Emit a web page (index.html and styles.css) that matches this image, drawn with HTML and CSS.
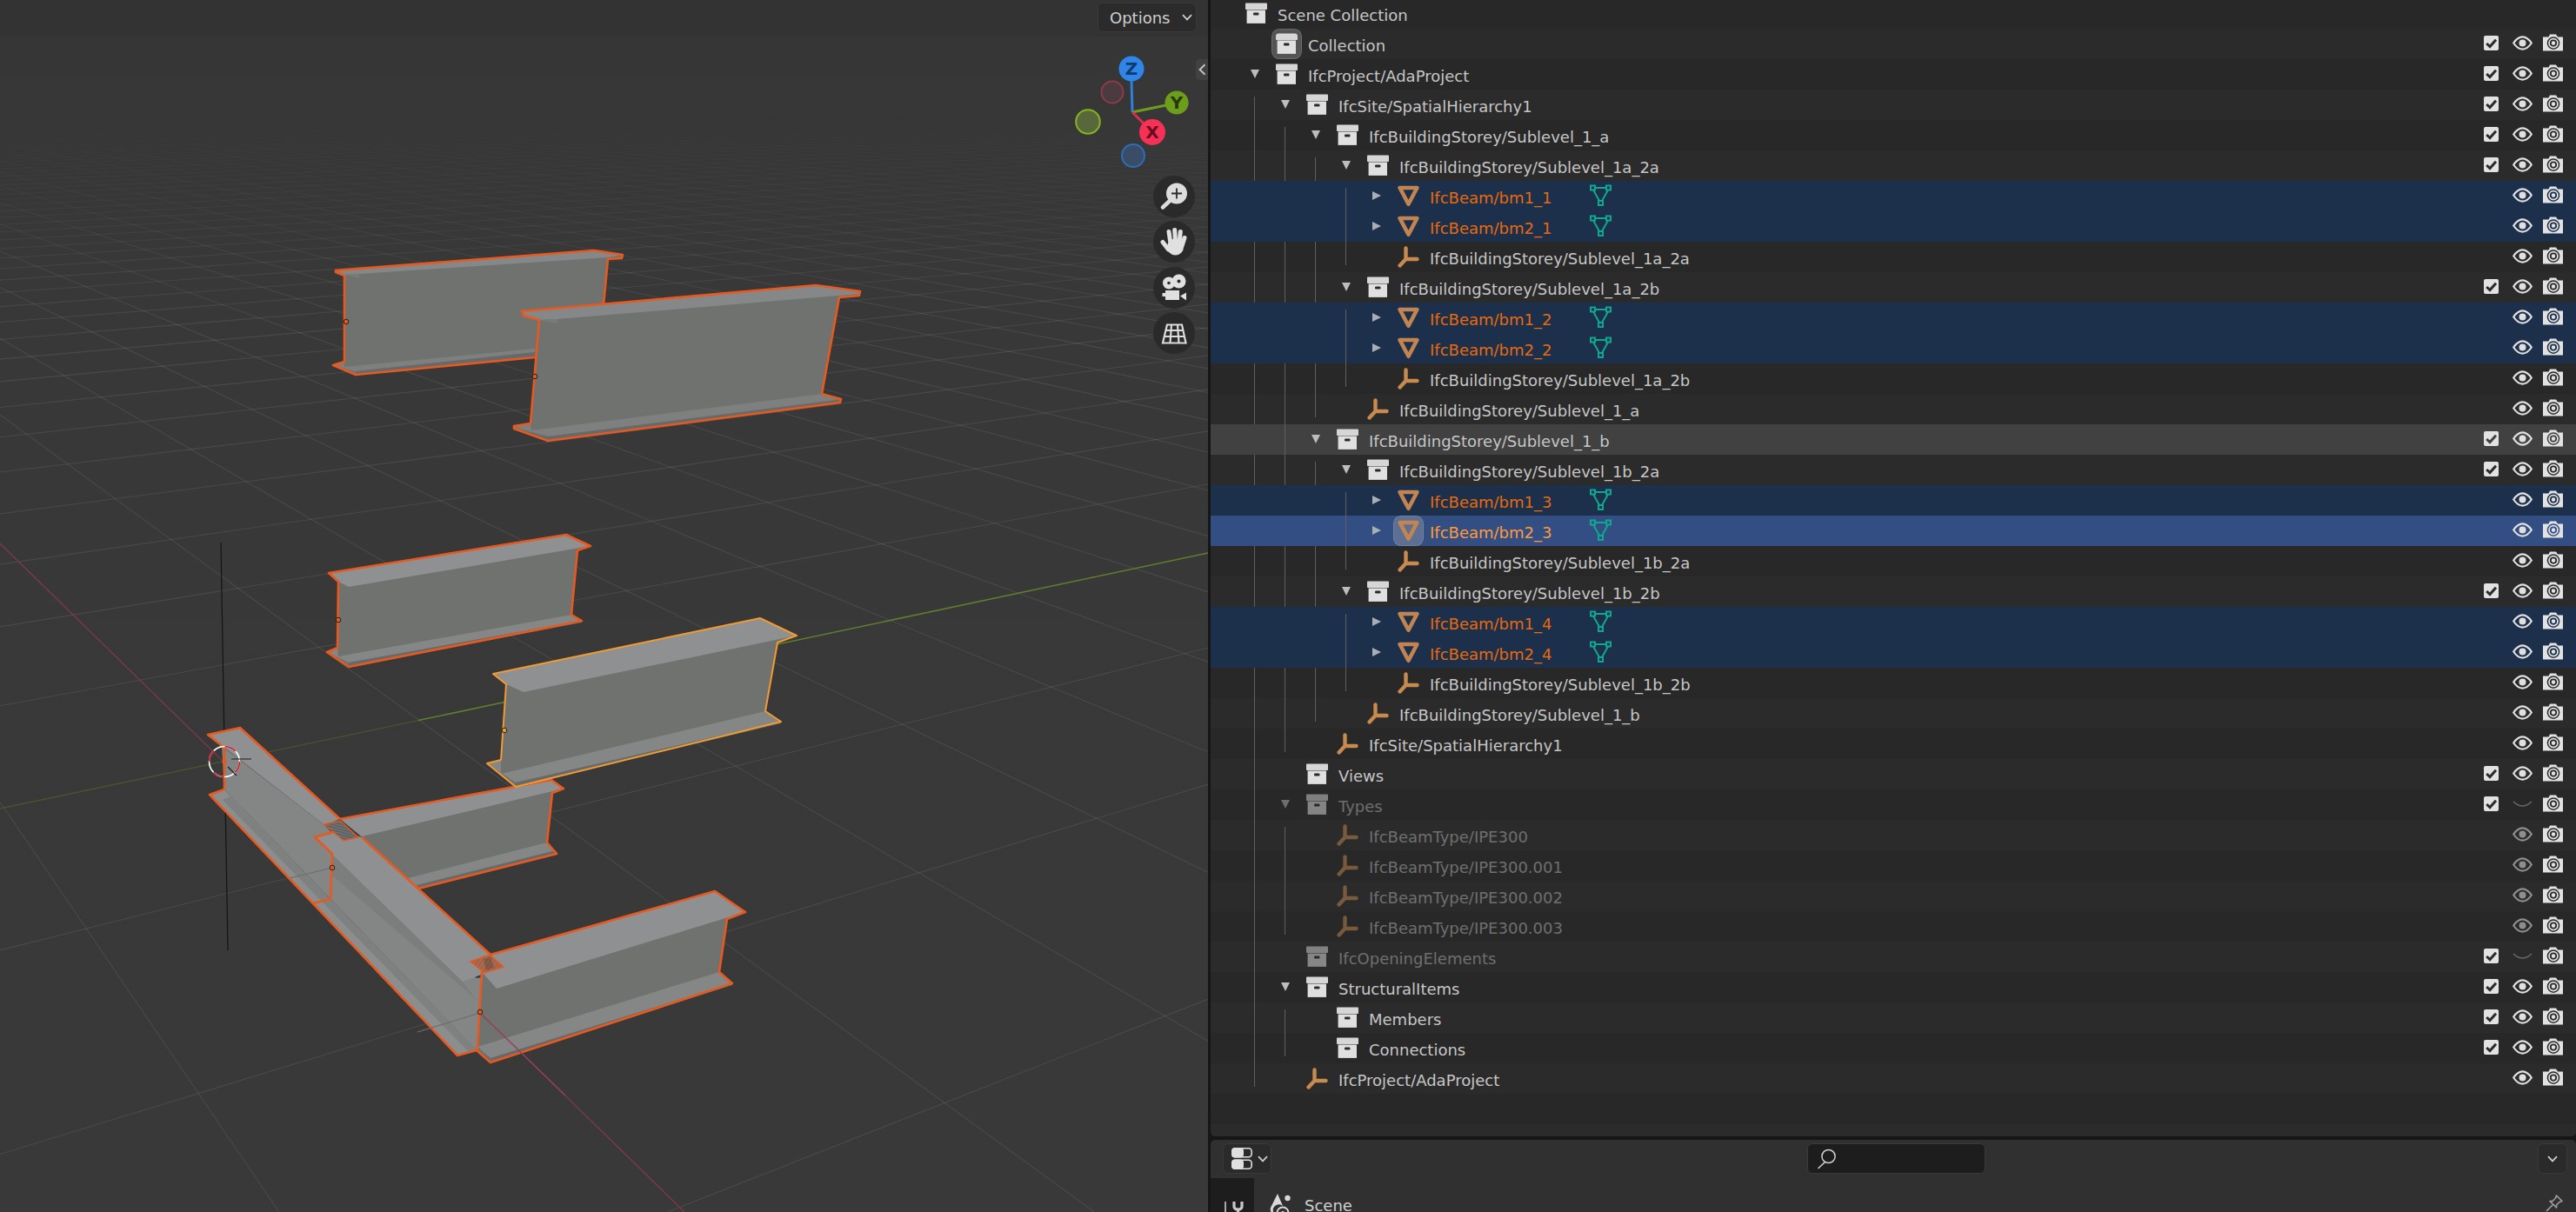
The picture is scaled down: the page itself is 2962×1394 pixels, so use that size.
FILE: index.html
```html
<!DOCTYPE html>
<html lang="en">
<head>
<meta charset="utf-8">
<title>Blender outliner</title>
<link rel="stylesheet" href="styles.css">
</head>
<body>
<svg class="defs" aria-hidden="true">
  <defs>
    <symbol id="box" viewBox="0 0 25 24"><rect x="0" y="0" width="25" height="7.6" rx="0.8" fill="#d6d6d6"/><rect x="1.6" y="8" width="21.4" height="15.4" fill="#e0e0e0"/><rect x="9" y="11" width="6.5" height="3" rx="1.2" fill="#2a2a2a"/></symbol>
    <symbol id="mesh" viewBox="0 0 25 25"><path d="M2.6 3 H22.4 L12.5 21.8 Z" fill="none" stroke="#c28552" stroke-width="4.6" stroke-linejoin="round"/></symbol>
    <symbol id="empty" viewBox="0 0 25 25"><path d="M9.5 2.5 V15 H22.5 M9.5 15 L2.6 22.5" fill="none" stroke="#c78a4f" stroke-width="4.4" stroke-linecap="round" stroke-linejoin="round"/></symbol>
    <symbol id="data" viewBox="0 0 25 25"><g fill="none" stroke="#10a78f" stroke-width="2"><rect x="1" y="1.5" width="5" height="5"/><rect x="19" y="1.5" width="5" height="5"/><rect x="10" y="19" width="5" height="5"/><path d="M6 4 H19 M4 6.5 L11 19 M21 6.5 L14 19"/></g></symbol>
    <symbol id="check" viewBox="0 0 17 17"><rect width="17" height="17" rx="2" fill="#e2e2e2"/><path d="M3.2 9 L7 12.6 L14 4.8" fill="none" stroke="currentColor" stroke-width="3"/></symbol>
    <symbol id="eye" viewBox="0 0 23 17"><path d="M1.2 8.5 C4.5 3.6 8 1.4 11.5 1.4 S18.5 3.6 21.8 8.5 C18.5 13.4 15 15.6 11.5 15.6 S4.5 13.4 1.2 8.5 Z" fill="none" stroke="#e0e0e0" stroke-width="2.2"/><circle cx="11.5" cy="8.5" r="4" fill="#e0e0e0"/></symbol>
    <symbol id="eyeoff" viewBox="0 0 23 17"><path d="M1 6 Q11.5 16 22 6" fill="none" stroke="#676767" stroke-width="1.6"/></symbol>
    <symbol id="cam" viewBox="0 0 23 20"><path d="M0 3.5 H6.5 L8 0.6 H15 L17 3.5 H23 V19.4 H0 Z" fill="#e2e2e2"/><circle cx="12" cy="10.6" r="6.6" fill="none" stroke="currentColor" stroke-width="1.5"/><circle cx="12" cy="10.6" r="3.2" fill="none" stroke="currentColor" stroke-width="1.8"/></symbol>
    <pattern id="hatchDark" width="3" height="3" patternUnits="userSpaceOnUse" patternTransform="rotate(15)"><rect width="3" height="3" fill="#77797a"/><path d="M0 1 H3" stroke="#47474a" stroke-width="1"/></pattern>
    <pattern id="hatchOrange" width="4" height="4" patternUnits="userSpaceOnUse" patternTransform="rotate(-55)"><rect width="4" height="4" fill="#75706c"/><path d="M0 2 H4" stroke="#e8591f" stroke-width="1.7"/></pattern>
    <linearGradient id="fadeGrad" gradientUnits="userSpaceOnUse" x1="0" y1="0" x2="0" y2="1394">
      <stop offset="0.093" stop-color="#000"/>
      <stop offset="0.165" stop-color="#595959"/>
      <stop offset="0.215" stop-color="#b3b3b3"/>
      <stop offset="0.273" stop-color="#fff"/>
    </linearGradient>
    <mask id="gridFade" maskUnits="userSpaceOnUse" x="0" y="0" width="1389" height="1394"><rect width="1389" height="1394" fill="url(#fadeGrad)"/></mask>
  </defs>
</svg>

<div class="app">
  <main class="viewport">
    <svg class="scene" viewBox="0 0 1389 1394">
      <g id="grid" mask="url(#gridFade)"></g>
      <path class="axis-y-dim" d="M0 930 L481 828.6"/>
      <path class="axis-y" d="M481 828.6 L1389 636"/>
      <path class="axis-x" d="M0 625 L787 1394"/>
      <path class="axis-z" d="M254 624 L262 1093"/>

      <g class="beam">
        <polygon class="web" points="386,311 683,288 716,293 715,297 699,298 692,372 700,380 615,411 409,431 383,420 396,416 396,317 386,313"/>
        <polygon class="top-a" points="386,311 683,288 716,293 700,296 413,315 396,316"/>
        <polygon class="under" points="396,316 413,315 413,320"/>
        <polygon class="foot" points="383,420 396,416 396,422 615,401 615,405 409,427"/>
        <polygon class="foot-low" points="409,427 615,405 615,410 409,431"/>
        <polygon class="edge" points="386,311 683,288 716,293 715,297 699,298 692,372 700,380 615,411 409,431 383,420 396,416 396,317 386,313"/>
        <circle class="dot" cx="398" cy="370" r="2.8"/>
      </g>
      <g class="beam">
        <polygon class="web" points="600,358 938,328 989,335 988,340 965,342 945,453 967,459 966,463 630,507 591,493 591,490 610,487 620,368 602,363"/>
        <polygon class="top-a" points="600,358 938,328 989,335 988,338 641,367 620,368 602,363"/>
        <polygon class="under" points="620,368 641,367 641,372"/>
        <polygon class="foot" points="591,491 610,487 611,495 945,453 967,459 630,502"/>
        <polygon class="foot-low" points="630,502 967,460 966,463 630,507 591,493"/>
        <polygon class="edge" points="600,358 938,328 989,335 988,340 965,342 945,453 967,459 966,463 630,507 591,493 591,490 610,487 620,368 602,363"/>
        <circle class="dot" cx="615" cy="433" r="2.8"/>
      </g>
      <g class="beam">
        <polygon class="web" points="378,659 651,615 679,628 664,633 657,707 669,714 401,767 376,750 388,745 389,669"/>
        <polygon class="top" points="378,659 651,615 679,628 401,675 389,669"/>
        <polygon class="foot2" points="376,750 388,745 389,755 657,707 669,714 401,762"/>
        <polygon class="foot-low" points="401,762 669,714 669,716 401,767"/>
        <polygon class="edge" points="378,659 651,615 679,628 664,633 657,707 669,714 401,767 376,750 388,745 389,669"/>
        <circle class="dot" cx="389" cy="713" r="2.8"/>
      </g>
      <g class="beam">
        <polygon class="web" points="391,942 634,897 648,907 635,912 629,969 640,982 481,1022 416,963"/>
        <polygon class="top" points="391,942 634,897 648,907 416,962"/>
        <polygon class="foot2" points="469,1010 629,969 640,981 481,1022"/>
        <polygon class="foot-low" points="479,1018 639,978 640,982 481,1022"/>
        <polyline class="edge" points="391,942 634,897 648,907 635,912 629,969 640,982 481,1022"/>
      </g>
      <g class="beam">
        <polygon class="web" points="567,775 874,711 916,731 894,739 880,818 898,830 593,905 560,878 576,874 582,787"/>
        <polygon class="top" points="567,775 874,711 916,731 602,796 582,787"/>
        <polygon class="foot2" points="560,878 576,874 576,890 880,818 898,830 593,900"/>
        <polygon class="foot-low" points="593,900 898,830 898,832 593,905"/>
        <polygon class="edge-sel" points="567,775 874,711 916,731 894,739 880,818 898,830 593,905 560,878 576,874 582,787"/>
        <circle class="dot-sel" cx="580" cy="840" r="2.8"/>
      </g>
      <g class="beam">
        <polygon class="gweb" points="255,858 373,949 548,1125 555,1124 548,1208 380,1034 258,908"/>
        <polygon class="gband" points="382,982 532,1129 548,1150 380,1005"/>
        <polygon class="gfoot" points="241,914 258,908 548,1208 526,1214"/>
        <polygon class="gstrip" points="265,916 548,1208 539,1210 256,920"/>
        <polygon class="top" points="239,845 276,837 391,942 373,949"/>
        <polygon class="top" points="362,963 391,955 416,963 564,1098 556,1120 532,1129"/>
        <polyline class="edge" points="258,860 239,845 276,837 391,942"/>
        <polyline class="edge" points="416,963 564,1098"/>
        <polyline class="edge" points="258,860 258,908 241,914 526,1214 548,1208"/>
        <polyline class="edge" points="391,955 362,963 382,982 380,1034 360,1039"/>
        <polygon fill="url(#hatchDark)" stroke="#e8591f" stroke-width="1.5" points="373,948 391,944 412,963 395,967"/>
        <path class="ghost" d="M333 1010 L382 998"/>
        <circle class="dot" cx="382" cy="998" r="2.8"/>
      </g>
      <g class="beam">
        <polygon class="web" points="564,1098 822,1025 857,1049 836,1057 827,1118 842,1131 564,1222 548,1208 549,1204 554,1118"/>
        <polygon class="top" points="564,1098 822,1025 857,1049 571,1137 554,1118"/>
        <polygon class="foot2" points="549,1204 827,1118 842,1131 564,1217"/>
        <polygon class="foot-low" points="564,1217 842,1131 842,1133 564,1222 548,1208"/>
        <polygon class="edge" points="564,1098 822,1025 857,1049 836,1057 827,1118 842,1131 564,1222 548,1208 549,1204 554,1118"/>
        <polygon fill="url(#hatchOrange)" stroke="#e8591f" stroke-width="1.5" points="541,1106 563,1098 579,1112 557,1119"/>
        <polygon class="hatch-core" points="556,1103 564,1101 568,1113 559,1116"/>
        <path class="ghost" d="M480 1187 L552 1165"/>
        <path class="axis-over" d="M552 1165 L650 1260"/>
        <circle class="dot" cx="552" cy="1164" r="2.8"/>
      </g>

      <g class="cursor">
        <circle class="cur-a" cx="258" cy="876" r="17.5"/>
        <circle class="cur-b" cx="258" cy="876" r="17.5"/>
        <path class="cur-line" d="M266 873 H289 M262 882 L272 892"/>
        <circle class="cur-dot" cx="258" cy="876" r="2.6"/>
      </g>

      <g class="gizmo">
        <path class="g-z" d="M1301 92 L1302 129"/>
        <path class="g-y" d="M1302 129 L1341 121"/>
        <path class="g-x" d="M1302 129 L1316 143"/>
        <circle class="gn-x" cx="1279" cy="106" r="12.5"/>
        <circle class="gn-y" cx="1251" cy="140" r="13.8"/>
        <circle class="gn-z" cx="1303" cy="179" r="13"/>
        <circle class="gp-z" cx="1301" cy="79" r="14.5"/>
        <circle class="gp-y" cx="1353" cy="118" r="13.6"/>
        <circle class="gp-x" cx="1325" cy="152" r="15"/>
        <text class="gl gl-z" x="1301" y="86">Z</text>
        <text class="gl gl-y" x="1353" y="125">Y</text>
        <text class="gl gl-x" x="1325" y="159">X</text>
      </g>
    </svg>

    <div class="options">Options<svg class="chev" viewBox="0 0 12 8"><path d="M1 1.2 L6 6.4 L11 1.2"/></svg></div>
    <div class="side-tab"><svg class="side-chev" viewBox="0 0 9 14"><path d="M7.5 1.2 L1.6 7 L7.5 12.8"/></svg></div>

    <div class="nav">
      <div class="nav-btn"><svg viewBox="0 0 48 48"><circle cx="27" cy="20.5" r="12" fill="#dcdcdc"/><path d="M19 29 L11 36.5" stroke="#dcdcdc" stroke-width="4.5" stroke-linecap="round"/><path d="M27 14.5 V26.5 M21 20.5 H33" stroke="#2a2a2a" stroke-width="1.8"/></svg></div>
      <div class="nav-btn"><svg viewBox="0 0 48 48"><g stroke="#e0e0e0" stroke-width="5" stroke-linecap="round"><path d="M11 24.5 L17.5 33"/><path d="M18 12.5 L20 26"/><path d="M24.7 10.5 L25.7 26"/><path d="M31.3 12.5 L30 26"/><path d="M36 19.5 L33 29"/></g><circle cx="25.5" cy="30" r="9.5" fill="#e0e0e0"/></svg></div>
      <div class="nav-btn"><svg viewBox="0 0 48 48"><circle cx="18" cy="18.5" r="7" fill="#e0e0e0"/><circle cx="29.5" cy="16.5" r="8" fill="#e0e0e0"/><circle cx="18" cy="18.5" r="1.8" fill="#2a2a2a"/><circle cx="29.5" cy="16.5" r="2" fill="#2a2a2a"/><rect x="14" y="27" width="16" height="11" fill="#e0e0e0"/><rect x="10.5" y="30" width="4" height="4" fill="#e0e0e0"/><path d="M31 33.5 L38 29.5 V38.5 Z" fill="#e0e0e0"/></svg></div>
      <div class="nav-btn"><svg viewBox="0 0 48 48"><g fill="none" stroke="#dcdcdc" stroke-width="2.2"><path d="M16 14.5 H33 L37.5 35.5 H11 Z"/><path d="M14.4 21 H34.6 M12.8 28 H36 M21 14.5 L19.5 35.5 M28 14.5 L29.5 35.5"/></g></svg></div>
    </div>
  </main>

  <section class="right">
    <div class="outliner">
      <div class="tree">
        <div class="row l0"><i class="tw"></i><svg class="ic"><use href="#box"/></svg><span class="nm">Scene Collection</span></div>
        <div class="row l1"><i class="tw"></i><svg class="ic ic-on"><use href="#box"/></svg><span class="nm">Collection</span><div class="vis"><svg class="ck"><use href="#check"/></svg><svg class="ey"><use href="#eye"/></svg><svg class="cm"><use href="#cam"/></svg></div></div>
        <div class="row l1"><i class="tw down"></i><svg class="ic"><use href="#box"/></svg><span class="nm">IfcProject/AdaProject</span><div class="vis"><svg class="ck"><use href="#check"/></svg><svg class="ey"><use href="#eye"/></svg><svg class="cm"><use href="#cam"/></svg></div></div>
        <div class="group g1">
          <div class="row l2"><i class="tw down"></i><svg class="ic"><use href="#box"/></svg><span class="nm">IfcSite/SpatialHierarchy1</span><div class="vis"><svg class="ck"><use href="#check"/></svg><svg class="ey"><use href="#eye"/></svg><svg class="cm"><use href="#cam"/></svg></div></div>
          <div class="group g2">
            <div class="row l3"><i class="tw down"></i><svg class="ic"><use href="#box"/></svg><span class="nm">IfcBuildingStorey/Sublevel_1_a</span><div class="vis"><svg class="ck"><use href="#check"/></svg><svg class="ey"><use href="#eye"/></svg><svg class="cm"><use href="#cam"/></svg></div></div>
            <div class="group g3">
              <div class="row l4"><i class="tw down"></i><svg class="ic"><use href="#box"/></svg><span class="nm">IfcBuildingStorey/Sublevel_1a_2a</span><div class="vis"><svg class="ck"><use href="#check"/></svg><svg class="ey"><use href="#eye"/></svg><svg class="cm"><use href="#cam"/></svg></div></div>
              <div class="group g4">
                <div class="row l5 sel"><i class="tw rt"></i><svg class="ic"><use href="#mesh"/></svg><span class="nm beam-nm">IfcBeam/bm1_1</span><svg class="dt"><use href="#data"/></svg><div class="vis"><span class="ck"></span><svg class="ey"><use href="#eye"/></svg><svg class="cm"><use href="#cam"/></svg></div></div>
                <div class="row l5 sel"><i class="tw rt"></i><svg class="ic"><use href="#mesh"/></svg><span class="nm beam-nm">IfcBeam/bm2_1</span><svg class="dt"><use href="#data"/></svg><div class="vis"><span class="ck"></span><svg class="ey"><use href="#eye"/></svg><svg class="cm"><use href="#cam"/></svg></div></div>
                <div class="row l5"><i class="tw"></i><svg class="ic"><use href="#empty"/></svg><span class="nm">IfcBuildingStorey/Sublevel_1a_2a</span><div class="vis"><span class="ck"></span><svg class="ey"><use href="#eye"/></svg><svg class="cm"><use href="#cam"/></svg></div></div>
              </div>
              <div class="row l4"><i class="tw down"></i><svg class="ic"><use href="#box"/></svg><span class="nm">IfcBuildingStorey/Sublevel_1a_2b</span><div class="vis"><svg class="ck"><use href="#check"/></svg><svg class="ey"><use href="#eye"/></svg><svg class="cm"><use href="#cam"/></svg></div></div>
              <div class="group g4">
                <div class="row l5 sel"><i class="tw rt"></i><svg class="ic"><use href="#mesh"/></svg><span class="nm beam-nm">IfcBeam/bm1_2</span><svg class="dt"><use href="#data"/></svg><div class="vis"><span class="ck"></span><svg class="ey"><use href="#eye"/></svg><svg class="cm"><use href="#cam"/></svg></div></div>
                <div class="row l5 sel"><i class="tw rt"></i><svg class="ic"><use href="#mesh"/></svg><span class="nm beam-nm">IfcBeam/bm2_2</span><svg class="dt"><use href="#data"/></svg><div class="vis"><span class="ck"></span><svg class="ey"><use href="#eye"/></svg><svg class="cm"><use href="#cam"/></svg></div></div>
                <div class="row l5"><i class="tw"></i><svg class="ic"><use href="#empty"/></svg><span class="nm">IfcBuildingStorey/Sublevel_1a_2b</span><div class="vis"><span class="ck"></span><svg class="ey"><use href="#eye"/></svg><svg class="cm"><use href="#cam"/></svg></div></div>
              </div>
              <div class="row l4"><i class="tw"></i><svg class="ic"><use href="#empty"/></svg><span class="nm">IfcBuildingStorey/Sublevel_1_a</span><div class="vis"><span class="ck"></span><svg class="ey"><use href="#eye"/></svg><svg class="cm"><use href="#cam"/></svg></div></div>
            </div>
            <div class="row l3 hover"><i class="tw down"></i><svg class="ic"><use href="#box"/></svg><span class="nm">IfcBuildingStorey/Sublevel_1_b</span><div class="vis"><svg class="ck"><use href="#check"/></svg><svg class="ey"><use href="#eye"/></svg><svg class="cm"><use href="#cam"/></svg></div></div>
            <div class="group g3">
              <div class="row l4"><i class="tw down"></i><svg class="ic"><use href="#box"/></svg><span class="nm">IfcBuildingStorey/Sublevel_1b_2a</span><div class="vis"><svg class="ck"><use href="#check"/></svg><svg class="ey"><use href="#eye"/></svg><svg class="cm"><use href="#cam"/></svg></div></div>
              <div class="group g4">
                <div class="row l5 sel"><i class="tw rt"></i><svg class="ic"><use href="#mesh"/></svg><span class="nm beam-nm">IfcBeam/bm1_3</span><svg class="dt"><use href="#data"/></svg><div class="vis"><span class="ck"></span><svg class="ey"><use href="#eye"/></svg><svg class="cm"><use href="#cam"/></svg></div></div>
                <div class="row l5 active"><i class="tw rt"></i><svg class="ic ic-on"><use href="#mesh"/></svg><span class="nm beam-nm">IfcBeam/bm2_3</span><svg class="dt"><use href="#data"/></svg><div class="vis"><span class="ck"></span><svg class="ey"><use href="#eye"/></svg><svg class="cm"><use href="#cam"/></svg></div></div>
                <div class="row l5"><i class="tw"></i><svg class="ic"><use href="#empty"/></svg><span class="nm">IfcBuildingStorey/Sublevel_1b_2a</span><div class="vis"><span class="ck"></span><svg class="ey"><use href="#eye"/></svg><svg class="cm"><use href="#cam"/></svg></div></div>
              </div>
              <div class="row l4"><i class="tw down"></i><svg class="ic"><use href="#box"/></svg><span class="nm">IfcBuildingStorey/Sublevel_1b_2b</span><div class="vis"><svg class="ck"><use href="#check"/></svg><svg class="ey"><use href="#eye"/></svg><svg class="cm"><use href="#cam"/></svg></div></div>
              <div class="group g4">
                <div class="row l5 sel"><i class="tw rt"></i><svg class="ic"><use href="#mesh"/></svg><span class="nm beam-nm">IfcBeam/bm1_4</span><svg class="dt"><use href="#data"/></svg><div class="vis"><span class="ck"></span><svg class="ey"><use href="#eye"/></svg><svg class="cm"><use href="#cam"/></svg></div></div>
                <div class="row l5 sel"><i class="tw rt"></i><svg class="ic"><use href="#mesh"/></svg><span class="nm beam-nm">IfcBeam/bm2_4</span><svg class="dt"><use href="#data"/></svg><div class="vis"><span class="ck"></span><svg class="ey"><use href="#eye"/></svg><svg class="cm"><use href="#cam"/></svg></div></div>
                <div class="row l5"><i class="tw"></i><svg class="ic"><use href="#empty"/></svg><span class="nm">IfcBuildingStorey/Sublevel_1b_2b</span><div class="vis"><span class="ck"></span><svg class="ey"><use href="#eye"/></svg><svg class="cm"><use href="#cam"/></svg></div></div>
              </div>
              <div class="row l4"><i class="tw"></i><svg class="ic"><use href="#empty"/></svg><span class="nm">IfcBuildingStorey/Sublevel_1_b</span><div class="vis"><span class="ck"></span><svg class="ey"><use href="#eye"/></svg><svg class="cm"><use href="#cam"/></svg></div></div>
            </div>
            <div class="row l3"><i class="tw"></i><svg class="ic"><use href="#empty"/></svg><span class="nm">IfcSite/SpatialHierarchy1</span><div class="vis"><span class="ck"></span><svg class="ey"><use href="#eye"/></svg><svg class="cm"><use href="#cam"/></svg></div></div>
          </div>
          <div class="row l2"><i class="tw"></i><svg class="ic"><use href="#box"/></svg><span class="nm">Views</span><div class="vis"><svg class="ck"><use href="#check"/></svg><svg class="ey"><use href="#eye"/></svg><svg class="cm"><use href="#cam"/></svg></div></div>
          <div class="row l2 dim"><i class="tw down"></i><svg class="ic"><use href="#box"/></svg><span class="nm">Types</span><div class="vis"><svg class="ck"><use href="#check"/></svg><svg class="ey ey-off"><use href="#eyeoff"/></svg><svg class="cm"><use href="#cam"/></svg></div></div>
          <div class="group g2">
            <div class="row l3 dim"><i class="tw"></i><svg class="ic"><use href="#empty"/></svg><span class="nm">IfcBeamType/IPE300</span><div class="vis"><span class="ck"></span><svg class="ey"><use href="#eye"/></svg><svg class="cm"><use href="#cam"/></svg></div></div>
            <div class="row l3 dim"><i class="tw"></i><svg class="ic"><use href="#empty"/></svg><span class="nm">IfcBeamType/IPE300.001</span><div class="vis"><span class="ck"></span><svg class="ey"><use href="#eye"/></svg><svg class="cm"><use href="#cam"/></svg></div></div>
            <div class="row l3 dim"><i class="tw"></i><svg class="ic"><use href="#empty"/></svg><span class="nm">IfcBeamType/IPE300.002</span><div class="vis"><span class="ck"></span><svg class="ey"><use href="#eye"/></svg><svg class="cm"><use href="#cam"/></svg></div></div>
            <div class="row l3 dim"><i class="tw"></i><svg class="ic"><use href="#empty"/></svg><span class="nm">IfcBeamType/IPE300.003</span><div class="vis"><span class="ck"></span><svg class="ey"><use href="#eye"/></svg><svg class="cm"><use href="#cam"/></svg></div></div>
          </div>
          <div class="row l2 dim"><i class="tw"></i><svg class="ic"><use href="#box"/></svg><span class="nm">IfcOpeningElements</span><div class="vis"><svg class="ck"><use href="#check"/></svg><svg class="ey ey-off"><use href="#eyeoff"/></svg><svg class="cm"><use href="#cam"/></svg></div></div>
          <div class="row l2"><i class="tw down"></i><svg class="ic"><use href="#box"/></svg><span class="nm">StructuralItems</span><div class="vis"><svg class="ck"><use href="#check"/></svg><svg class="ey"><use href="#eye"/></svg><svg class="cm"><use href="#cam"/></svg></div></div>
          <div class="group g2">
            <div class="row l3"><i class="tw"></i><svg class="ic"><use href="#box"/></svg><span class="nm">Members</span><div class="vis"><svg class="ck"><use href="#check"/></svg><svg class="ey"><use href="#eye"/></svg><svg class="cm"><use href="#cam"/></svg></div></div>
            <div class="row l3"><i class="tw"></i><svg class="ic"><use href="#box"/></svg><span class="nm">Connections</span><div class="vis"><svg class="ck"><use href="#check"/></svg><svg class="ey"><use href="#eye"/></svg><svg class="cm"><use href="#cam"/></svg></div></div>
          </div>
          <div class="row l2"><i class="tw"></i><svg class="ic"><use href="#empty"/></svg><span class="nm">IfcProject/AdaProject</span><div class="vis"><span class="ck"></span><svg class="ey"><use href="#eye"/></svg><svg class="cm"><use href="#cam"/></svg></div></div>
        </div>
        <div class="row"></div>
        <div class="row"></div>
      </div>
    </div>

    <div class="props">
      <div class="props-head">
        <div class="editor-btn">
          <svg class="toggle" viewBox="0 0 24 25"><rect x="0.8" y="0.8" width="22.4" height="10" rx="3.5" fill="none" stroke="#e0e0e0" stroke-width="1.6"/><rect x="0" y="0" width="14" height="11.6" rx="4" fill="#e0e0e0"/><rect x="0.8" y="14.2" width="22.4" height="10" rx="3.5" fill="none" stroke="#e0e0e0" stroke-width="1.6"/><rect x="0" y="13.4" width="14" height="11.6" rx="4" fill="#e0e0e0"/></svg>
          <svg class="chev" viewBox="0 0 12 8"><path d="M1 1.2 L6 6.4 L11 1.2"/></svg>
        </div>
        <div class="search"><svg class="mag" viewBox="0 0 24 24"><circle cx="14.5" cy="9" r="7.6" fill="none" stroke="#d0d0d0" stroke-width="1.5"/><path d="M10.5 15.5 L2.5 23" stroke="#d0d0d0" stroke-width="1.6"/></svg></div>
        <div class="drop"><svg class="chev" viewBox="0 0 12 8"><path d="M1 1.2 L6 6.4 L11 1.2"/></svg></div>
      </div>
      <div class="props-body">
        <div class="tabs"><svg class="wrench" viewBox="0 0 24 24"><path d="M2 2 V16 M0 21 H7" stroke="#b8b8b8" stroke-width="1.8" fill="none"/><path d="M12 2 V8 C12 12 21 12 21 8 V2 M16.5 11 V24" stroke="#c8c8c8" stroke-width="3.2" fill="none"/></svg></div>
        <div class="scene-row">
          <svg class="scene-ic" viewBox="0 0 26 30"><path d="M9 0 L15 14 A6 6 0 0 0 6 24 C2 23 0 20 1 16 Z" fill="#d8d8d8"/><circle cx="20.5" cy="5" r="3.2" fill="#d8d8d8"/><circle cx="15" cy="22" r="6.5" fill="none" stroke="#d8d8d8" stroke-width="2"/><circle cx="15" cy="22" r="2" fill="#d8d8d8"/></svg>
          <span class="scene-nm">Scene</span>
          <svg class="pin" viewBox="0 0 20 20"><path d="M12.5 1 L19 7.5 L16 8.5 L12.5 12 L12.5 15 L5 7.5 L8 7.5 L11.5 4 Z M8.5 11.5 L1 19" fill="none" stroke="#9c9c9c" stroke-width="1.7" stroke-linejoin="round"/></svg>
        </div>
      </div>
    </div>
  </section>
</div>
<script src="grid.js"></script>
</body>
</html>
```

FILE: styles.css
```css
* { box-sizing: border-box; }
html, body { margin: 0; padding: 0; width: 2962px; height: 1394px; overflow: hidden; background: #161616; }
body { font-family: "DejaVu Sans", sans-serif; color: #c6c6c6; font-size: 18px; }
.defs { position: absolute; width: 0; height: 0; }
.app { display: flex; height: 1394px; }

/* 3D viewport */
.viewport { position: relative; flex: 0 0 1389px; height: 1394px; overflow: hidden; background: linear-gradient(#333333 0, #333333 42px, #363636 42px, #383838 300px, #393939 100%); }
.scene { position: absolute; inset: 0; width: 1389px; height: 1394px; }
.grid-line { stroke: #fff; stroke-width: 1.1; fill: none; }
.axis-x { stroke: #7d3a4a; stroke-width: 1.3; fill: none; }
.axis-over { stroke: #94405a; stroke-width: 1.5; fill: none; }
.axis-y { stroke: #5f7f2c; stroke-width: 1.5; fill: none; }
.axis-y-dim { stroke: #47542f; stroke-width: 1.3; fill: none; }
.axis-z { stroke: #141414; stroke-width: 1.2; fill: none; }
.ghost { stroke: #6d6f6e; stroke-width: 1.2; fill: none; }

.web { fill: #707270; }
.gweb { fill: #848685; }
.gband { fill: #7c7e7d; }
.top-a { fill: #868788; }
.top { fill: #8f9091; }
.under { fill: #797a7a; }
.foot { fill: #7e7f7f; }
.foot2 { fill: #858686; }
.foot-low { fill: #676a6a; }
.gfoot { fill: #8c8d8d; }
.gstrip { fill: #7f8080; }
.hatch-core { fill: #3c3c3e; opacity: .35; }
.edge { fill: none; stroke: #e8591f; stroke-width: 2.6; stroke-linejoin: round; }
.edge-sel { fill: none; stroke: #f29a32; stroke-width: 2; stroke-linejoin: round; }
.dot { fill: #e8591f; stroke: #222; stroke-width: 1; }
.dot-sel { fill: #f29a32; stroke: #222; stroke-width: 1; }
.cur-a { fill: none; stroke: #fff; stroke-width: 1.6; }
.cur-b { fill: none; stroke: #d01c2c; stroke-width: 1.6; stroke-dasharray: 13.7 13.8; }
.cur-line { stroke: #1c1c1c; stroke-width: 1.2; fill: none; }
.cur-dot { fill: #e8591f; }

.g-z { stroke: #2e80dc; stroke-width: 3; }
.g-y { stroke: #6d9e1b; stroke-width: 3; }
.g-x { stroke: #d6304e; stroke-width: 3; }
.gn-x { fill: #4b3a40; stroke: #8e3a4c; stroke-width: 2; }
.gn-y { fill: #59683a; stroke: #84b41e; stroke-width: 2; }
.gn-z { fill: #3b4c66; stroke: #2c6cb8; stroke-width: 2; }
.gp-z { fill: #2f85e8; }
.gp-y { fill: #6d9e1b; }
.gp-x { fill: #f53255; }
.gl { font-family: "DejaVu Sans", sans-serif; font-size: 20px; font-weight: 700; text-anchor: middle; }
.gl-z { fill: #0f3a70; }
.gl-y { fill: #26390a; }
.gl-x { fill: #6b0a20; }

.options { position: absolute; left: 1262px; top: 3px; width: 114px; height: 34px; padding-left: 13px; display: flex; align-items: center; gap: 14px; background: #2b2b2b; border: 1px solid #3a3a3a; border-radius: 6px; color: #cfcfcf; font-size: 18px; }
.chev { width: 12px; height: 8px; flex: none; }
.chev path { fill: none; stroke: #d0d0d0; stroke-width: 1.7; }
.side-tab { position: absolute; right: 0; top: 68px; width: 14px; height: 24px; background: #414141; border-radius: 4px 0 0 4px; display: flex; align-items: center; justify-content: center; }
.side-chev { width: 9px; height: 14px; }
.side-chev path { fill: none; stroke: #c0c0c0; stroke-width: 2; }
.nav { position: absolute; left: 1326px; top: 202px; display: flex; flex-direction: column; gap: 4.3px; }
.nav-btn { width: 48px; height: 48px; border-radius: 50%; background: #2a2a2a; }
.nav-btn svg { display: block; width: 48px; height: 48px; }

/* Right column */
.right { flex: 1; margin-left: 3px; display: flex; flex-direction: column; min-width: 0; }
.outliner { height: 1307px; overflow: hidden; border-radius: 0 0 5px 5px; }
.tree { margin-top: -2px; background: repeating-linear-gradient(#282828 0, #282828 35px, #2b2b2b 35px, #2b2b2b 70px); position: relative; }
.row { height: 35px; display: flex; align-items: center; }
.l0 { padding-left: 4px; }
.l1 { padding-left: 39px; }
.l2 { padding-left: 74px; }
.l3 { padding-left: 109px; }
.l4 { padding-left: 144px; }
.l5 { padding-left: 179px; }
.sel { background: #1c2f4b; }
.active { background: #334e82; }
.hover { background: #414141; }
.tw { flex: 0 0 24px; width: 24px; height: 10px; margin-right: 12px; display: flex; justify-content: center; margin-top: -1px; }
.tw.down::before { content: ""; width: 10px; height: 10px; background: #bdbdbd; clip-path: polygon(0 0, 100% 0, 50% 100%); }
.tw.rt::before { content: ""; width: 10px; height: 10px; background: #a9aeb6; clip-path: polygon(0 0, 100% 50%, 0 100%); }
.ic { flex: 0 0 25px; width: 25px; height: 25px; }
.ic-on { background: #545454; border-radius: 4px; box-shadow: 0 0 0 4px #545454, 0 0 0 5px #6c6c6c; }
.active .ic-on { background: #5d6f92; box-shadow: 0 0 0 4px #5d6f92, 0 0 0 5px #6f80a0; }
.nm { margin-left: 12px; padding-top: 4px; line-height: 31px; white-space: nowrap; }
.beam-nm { color: #e86a0d; }
.active .beam-nm { color: #ff9a3a; }
.dt { flex: 0 0 25px; width: 25px; height: 25px; margin-left: 44px; margin-top: -3px; }
.vis { margin-left: auto; margin-right: 15px; margin-top: -3px; display: flex; align-items: center; color: #2a2a2a; }
.sel .vis { color: #1c2f4b; }
.active .vis { color: #334e82; }
.hover .vis { color: #414141; }
.ck { width: 17px; height: 17px; margin-right: 16px; display: block; }
.ey { width: 23px; height: 17px; margin-right: 12px; display: block; }
.cm { width: 23px; height: 20px; display: block; margin-top: -1px; }
.dim .nm { color: #6f6f6f; }
.dim .ic { opacity: .5; }
.dim .tw.down::before { background: #6e6e6e; }
.dim .ey { opacity: .55; }
.dim .ey-off { opacity: 1; }

.group { position: relative; }
.group::before { content: ""; position: absolute; top: 8px; bottom: 8px; width: 1px; background: #5f5f5f; }
.g1::before { left: 50px; }
.g2::before { left: 85px; }
.g3::before { left: 120px; }
.g4::before { left: 155px; }

/* Properties editor */
.props { margin-top: 4px; flex: 1; min-height: 0; overflow: hidden; background: #303030; border-radius: 5px 5px 0 0; }
.props-head { display: flex; align-items: center; height: 35px; margin-top: 4px; padding: 0 10px 0 14px; }
.editor-btn { width: 56px; height: 35px; display: flex; align-items: center; gap: 6px; padding-left: 9px; background: #2a2a2a; border: 1px solid #3a3a3a; border-radius: 6px; }
.toggle { width: 24px; height: 25px; flex: none; }
.search { width: 205px; height: 35px; margin-left: 616px; padding-left: 9px; display: flex; align-items: center; background: #1d1d1d; border: 1px solid #3a3a3a; border-radius: 6px; }
.mag { width: 24px; height: 24px; }
.drop { width: 34px; height: 35px; margin-left: auto; display: flex; align-items: center; justify-content: center; background: #2a2a2a; border: 1px solid #3a3a3a; border-radius: 6px; }
.props-body { display: flex; margin-top: 5px; height: 39px; overflow: hidden; }
.tabs { flex: 0 0 50px; background: #1d1d1d; padding: 25px 0 0 15px; }
.wrench { width: 24px; height: 24px; display: block; }
.scene-row { flex: 1; display: flex; align-items: flex-start; padding: 18px 15px 0 18px; }
.scene-ic { width: 26px; height: 30px; flex: none; }
.scene-nm { margin-left: 14px; margin-top: 7px; line-height: 14px; color: #d0d0d0; }
.pin { width: 20px; height: 20px; margin-left: auto; margin-top: 1px; }
```

FILE: grid.js
```js
// Perspective floor grid: two families of lines running to the view's vanishing points.
(function () {
  var NS = 'http://www.w3.org/2000/svg';
  var host = document.getElementById('grid');
  var O = [258, 876], VX = [-600, 40], VY = [4204, 40];

  function along(v, k, t) {
    var s = t / (t + k);
    return [O[0] + (v[0] - O[0]) * s, O[1] + (v[1] - O[1]) * s];
  }
  function strength(t) {
    var a = Math.abs(t);
    if (a <= 30) return 0.085;
    if (a <= 120) return 0.085 - (a - 30) / 90 * 0.06;
    return 0;
  }
  function draw(from, p, t) {
    var l = document.createElementNS(NS, 'line');
    l.setAttribute('class', 'grid-line');
    l.setAttribute('x1', from[0]);
    l.setAttribute('y1', from[1]);
    l.setAttribute('x2', from[0] + (p[0] - from[0]) * 4);
    l.setAttribute('y2', from[1] + (p[1] - from[1]) * 4);
    l.setAttribute('stroke-opacity', strength(t).toFixed(4));
    host.appendChild(l);
  }
  var t;
  for (t = -7; t <= 120; t++) { if (t) draw(VY, along(VX, 7.9, t), t); }
  for (t = -16; t <= 120; t++) { if (t) draw(VX, along(VY, 16.6, t), t); }
})();
```
